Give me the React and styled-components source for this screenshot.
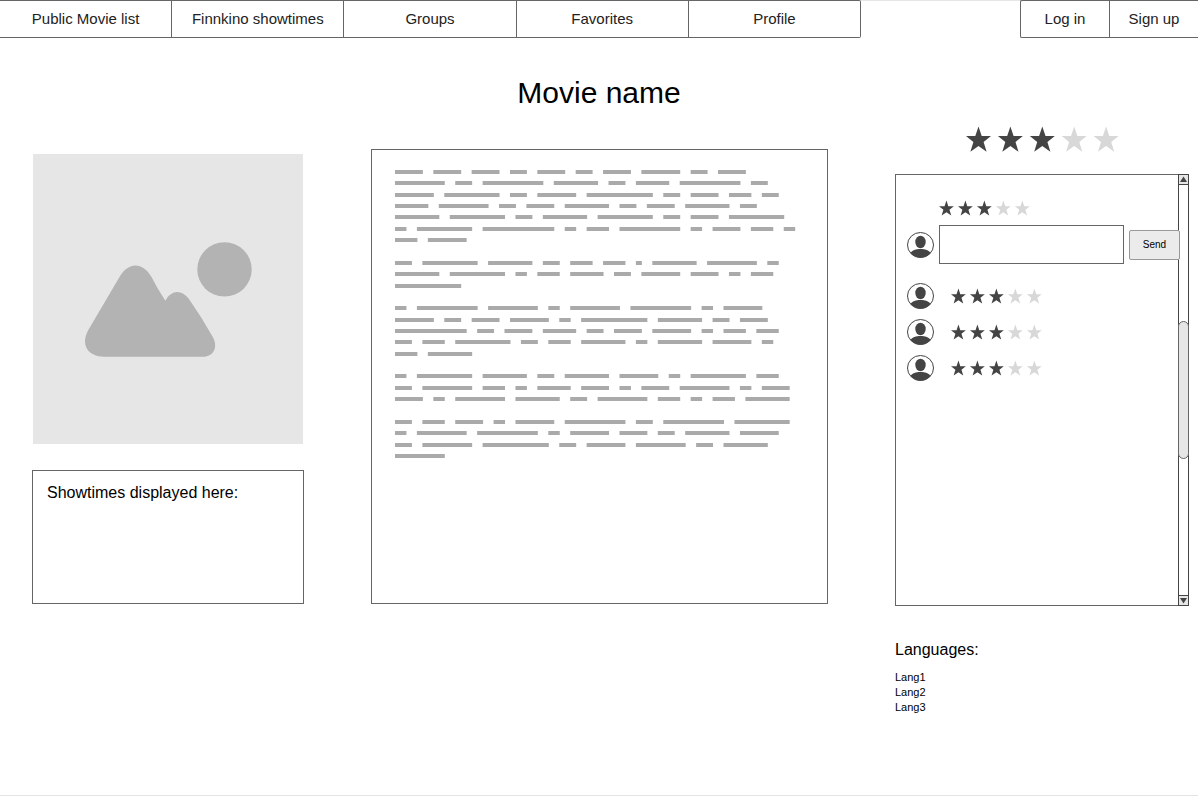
import React from "react";
import styled, { createGlobalStyle, css } from "styled-components";

const line = "#666";
const dark = "#444";

const GlobalStyle = createGlobalStyle`
  *, *::before, *::after { box-sizing: border-box; }
  body {
    margin: 0;
    background: #fff;
    color: #000;
    font-family: "Liberation Sans", Arial, sans-serif;
  }
`;

const Page = styled.div`
  display: flex;
  flex-direction: column;
  min-height: 100vh;
  border-bottom: 1px solid #e3e3e3;
`;

const Header = styled.header`
  display: flex;
  justify-content: space-between;
  height: 38px;
  background: linear-gradient(#e6e6e6, #e6e6e6) top / 100% 1px no-repeat;
`;

const LinkBar = styled.nav`
  display: flex;
  border: solid ${line};
  background: #fff;
  ${(p) =>
    p.$side === "left"
      ? css`
          flex: 0 1 861px;
          border-width: 1px 1px 1px 0;
          border-radius: 0 2px 2px 0;
        `
      : css`
          flex: 0 0 178px;
          border-width: 1px 0 1px 1px;
          border-radius: 2px 0 0 2px;
        `}
`;

const BarLink = styled.a`
  flex: 1;
  display: flex;
  align-items: center;
  justify-content: center;
  color: #222;
  font-size: 15px;
  line-height: 20px;
  text-decoration: none;
  white-space: nowrap;

  & + & {
    border-left: 1px solid ${line};
  }
`;

const Title = styled.h1`
  margin: 37px 0 15px;
  font-size: 30px;
  line-height: 36px;
  font-weight: 400;
  text-align: center;
`;

const Columns = styled.main`
  display: grid;
  grid-template-columns: 272fr 457fr 294fr;
  gap: 67px;
  align-items: start;
  padding: 0 9px 72px 32px;
`;

const Column = styled.div`
  display: flex;
  flex-direction: column;
  min-width: 0;
  padding-top: ${(p) => p.$top || 0}px;
`;

const PosterArt = styled.svg`
  display: block;
  margin: 0 1px 26px;
  background: #e6e6e6;
  fill: #b3b3b3;
`;

const Panel = styled.section`
  border: 1px solid ${line};
  background: #fff;
`;

const ShowtimesPanel = styled(Panel)`
  min-height: 134px;
  padding: 12px 14px;
`;

const Heading = styled.h2`
  margin: 0;
  font-size: 16px;
  line-height: 20px;
  font-weight: 400;
`;

const SynopsisPanel = styled(Panel)`
  min-height: 455px;
  padding: 20px 23px;
`;

const SynopsisLines = styled.svg`
  display: block;
  max-width: 100%;
  fill: #aaa;
`;

const Rating = styled.svg`
  display: block;
  flex: none;
`;

const OverallRating = styled.div`
  display: flex;
  justify-content: center;
  margin-bottom: 22px;
`;

const ReviewsPanel = styled.section`
  display: flex;
  min-height: 432px;
`;

const ReviewsBody = styled.div`
  flex: 1;
  min-width: 0;
  padding: 25px 0 0 11px;
  border: solid ${line};
  border-width: 1px 0 1px 1px;
`;

const Composer = styled.form`
  position: relative;
  display: grid;
  grid-template-columns: 27px 1fr 51px;
  gap: 9px 5px;
  align-items: center;
  margin-right: -2px;
`;

const ComposerRating = styled.div`
  grid-column: 2 / -1;
`;

const CommentInput = styled.input`
  width: 100%;
  min-width: 0;
  height: 39px;
  padding: 0 8px;
  border: 1px solid ${line};
  border-radius: 0;
  background: #fff;
  font: inherit;
  font-size: 11px;
`;

const SendButton = styled.button`
  height: 30px;
  padding: 0;
  border: 1px solid #999;
  border-radius: 2px;
  background: #ebebeb;
  color: #000;
  font-family: inherit;
  font-size: 10px;
`;

const ReviewList = styled.ul`
  display: flex;
  flex-direction: column;
  gap: 10px;
  margin: 19px 0 0;
  padding: 0;
  list-style: none;
`;

const Review = styled.li`
  display: flex;
  align-items: center;
  gap: 17px;
`;

const AvatarIcon = styled.svg`
  display: block;
  flex: none;
`;

const ScrollTrack = styled.div`
  display: flex;
  flex-direction: column;
  width: 11px;
  border: 1px solid ${dark};
`;

const ScrollArrow = styled.svg`
  display: block;
  width: 9px;
  height: 10px;
  background: #e6e6e6;
  fill: ${dark};
  border: solid ${dark};
  border-width: ${(p) => (p.$down ? "1px 0 0" : "0 0 1px")};
`;

const ScrollSpace = styled.div`
  flex: 1;
`;

const ScrollThumb = styled.div`
  flex: 1;
  margin: 0 -1px;
  border: 1px solid ${line};
  border-radius: 6px;
  background: #e6e6e6;
`;

const Languages = styled.section`
  margin-top: 34px;
`;

const LanguageList = styled.ul`
  margin: 10px 0 0;
  padding: 0;
  list-style: none;
  font-size: 11px;
  line-height: 15px;
`;

const STAR =
  "12.5,0 15.7,9.5 25,9.5 17.6,15.5 20.6,25.3 12.5,19.6 4.4,25.3 7.4,15.5 0,9.5 9.3,9.5";

function Stars({ value, large }) {
  return (
    <Rating
      width={large ? 153 : 91}
      height={large ? 26 : 16}
      viewBox="0 0 153 26"
      role="img"
      aria-label={`${value} out of 5 stars`}
    >
      {[0, 1, 2, 3, 4].map((i) => (
        <polygon
          key={i}
          points={STAR}
          transform={`translate(${i * 31.9} 0.5)`}
          fill={i < value ? dark : "#d8d8d8"}
        />
      ))}
    </Rating>
  );
}

function Avatar() {
  return (
    <AvatarIcon width="27" height="26" viewBox="0 0 27 26" aria-hidden="true">
      <ellipse cx="13.5" cy="13" rx="13" ry="12.5" fill="#fff" stroke={dark} />
      <ellipse cx="13.5" cy="10" rx="5.2" ry="6.2" fill={dark} />
      <path
        d="M3.5 21 C5 18.2 9 17 13.5 17 C18 17 22 18.2 23.5 21 C21 24.2 17.5 25.8 13.5 25.8 C9.5 25.8 6 24.2 3.5 21 Z"
        fill={dark}
      />
    </AvatarIcon>
  );
}

function Poster() {
  return (
    <PosterArt viewBox="0 0 270 290" role="img" aria-label="Movie poster">
      <circle cx="191.5" cy="115.4" r="27.2" />
      <path
        transform="translate(37 76) scale(0.3333)"
        d="M102 380 C55 380 30 345 55 300 L148 142 C175 95 218 95 245 142 C258 168 272 190 286 212 C305 178 335 178 357 207 Q395 262 428 320 C446 352 430 380 400 380 Z"
      />
    </PosterArt>
  );
}

/* Word lengths, in characters, for each line of the synopsis placeholder. */
const SYNOPSIS = [
  [5, 5, 5, 3, 5, 3, 5, 7, 3, 5],
  [9, 3, 11, 8, 3, 6, 11, 3],
  [7, 10, 3, 7, 12, 3, 5, 4, 3],
  [6, 9, 3, 5, 8, 3, 5, 8, 3],
  [8, 10, 3, 8, 10, 3, 5, 10],
  [2, 10, 13, 2, 4, 11, 2, 5, 4, 2],
  [4, 7],
  [],
  [3, 10, 8, 3, 4, 4, 1, 8, 9, 2],
  [8, 10, 2, 4, 6, 3, 7, 5, 2, 4],
  [12],
  [],
  [2, 11, 9, 2, 9, 11, 2, 7],
  [7, 3, 5, 7, 2, 12, 8, 3, 5],
  [13, 3, 5, 6, 3, 5, 7, 2, 4, 4],
  [3, 4, 10, 3, 4, 8, 2, 8, 7, 2],
  [4, 8],
  [],
  [2, 10, 8, 3, 8, 7, 2, 10, 4],
  [3, 9, 4, 2, 6, 5, 2, 5, 9, 2, 5],
  [5, 2, 9, 8, 3, 9, 4, 2, 4, 8],
  [],
  [3, 4, 5, 2, 7, 11, 3, 11, 10],
  [2, 9, 11, 2, 7, 5, 3, 8, 7],
  [3, 9, 12, 3, 7, 9, 3, 8],
  [9],
];

const CHAR = 5.475;
const LEADING = 11.36;

function Synopsis() {
  return (
    <SynopsisLines width="402" height="290" viewBox="0 0 402 290" role="img" aria-label="Synopsis">
      {SYNOPSIS.map((words, row) => {
        let column = 0;
        return words.map((length) => {
          const start = column;
          column += length + 2;
          return (
            <rect
              key={`${row}-${start}`}
              x={start * CHAR}
              y={Math.round(row * LEADING)}
              width={length * CHAR + 0.5}
              height="4"
            />
          );
        });
      })}
    </SynopsisLines>
  );
}

const pages = ["Public Movie list", "Finnkino showtimes", "Groups", "Favorites", "Profile"];
const account = ["Log in", "Sign up"];
const reviews = [3, 3, 3];
const languages = ["Lang1", "Lang2", "Lang3"];

export default function App() {
  return (
    <>
      <GlobalStyle />
      <Page>
        <Header>
          <LinkBar $side="left" aria-label="Main">
            {pages.map((name) => (
              <BarLink key={name} href="#">{name}</BarLink>
            ))}
          </LinkBar>
          <LinkBar $side="right" aria-label="Account">
            {account.map((name) => (
              <BarLink key={name} href="#">{name}</BarLink>
            ))}
          </LinkBar>
        </Header>
        <Title>Movie name</Title>
        <Columns>
          <Column $top={28}>
            <Poster />
            <ShowtimesPanel>
              <Heading>Showtimes displayed here:</Heading>
            </ShowtimesPanel>
          </Column>
          <Column $top={23}>
            <SynopsisPanel>
              <Synopsis />
            </SynopsisPanel>
          </Column>
          <Column>
            <OverallRating>
              <Stars value={3} large />
            </OverallRating>
            <ReviewsPanel aria-label="Reviews">
              <ReviewsBody>
                <Composer onSubmit={(e) => e.preventDefault()}>
                  <ComposerRating>
                    <Stars value={3} />
                  </ComposerRating>
                  <Avatar />
                  <CommentInput type="text" aria-label="Your review" />
                  <SendButton type="submit">Send</SendButton>
                </Composer>
                <ReviewList>
                  {reviews.map((value, i) => (
                    <Review key={i}>
                      <Avatar />
                      <Stars value={value} />
                    </Review>
                  ))}
                </ReviewList>
              </ReviewsBody>
              <ScrollTrack aria-hidden="true">
                <ScrollArrow viewBox="0 0 9 9">
                  <path d="M4.5 1.5 L8 7 H1 Z" />
                </ScrollArrow>
                <ScrollSpace />
                <ScrollThumb />
                <ScrollSpace />
                <ScrollArrow $down viewBox="0 0 9 9">
                  <path d="M4.5 7.5 L8 2 H1 Z" />
                </ScrollArrow>
              </ScrollTrack>
            </ReviewsPanel>
            <Languages>
              <Heading>Languages:</Heading>
              <LanguageList>
                {languages.map((name) => (
                  <li key={name}>{name}</li>
                ))}
              </LanguageList>
            </Languages>
          </Column>
        </Columns>
      </Page>
    </>
  );
}
